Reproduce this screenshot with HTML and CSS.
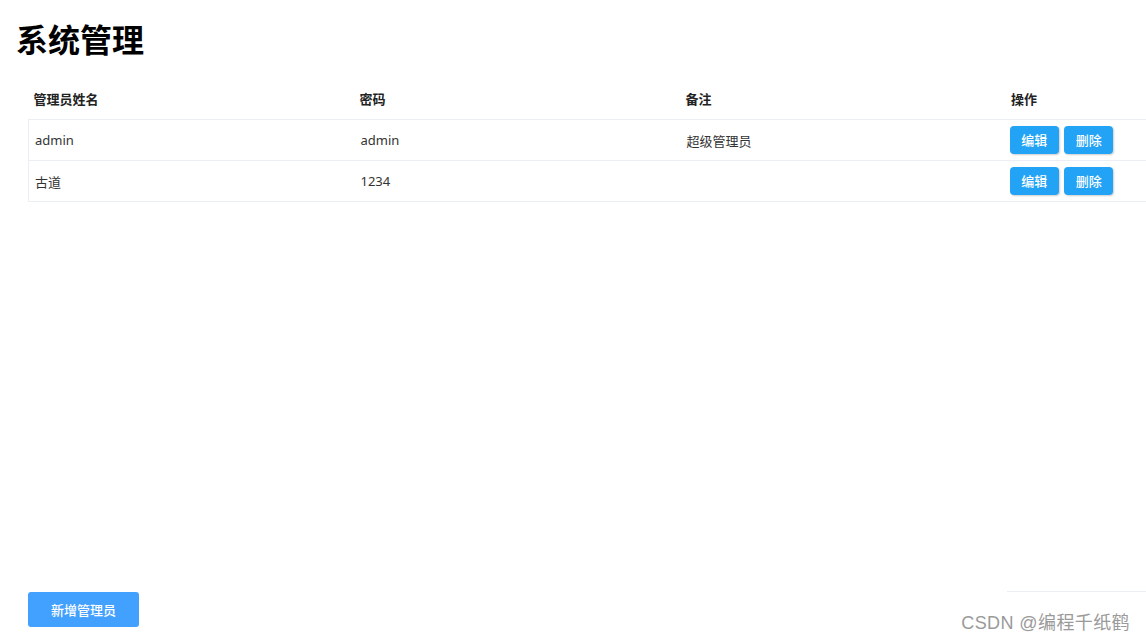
FILE: index.html
```html
<!DOCTYPE html>
<html lang="zh-CN">
<head>
    <meta charset="UTF-8">
    <meta name="viewport" content="width=device-width, initial-scale=1.0">
    <title>系统管理</title>
    <link rel="stylesheet" href="styles.css">
</head>
<body>
    <div class="page">
        <h1 class="title">系统管理</h1>

        <div class="table-wrap">
            <table class="admin-table">
                <thead>
                    <tr>
                        <th>管理员姓名</th>
                        <th>密码</th>
                        <th>备注</th>
                        <th>操作</th>
                    </tr>
                </thead>
                <tbody>
                    <tr>
                        <td>admin</td>
                        <td>admin</td>
                        <td>超级管理员</td>
                        <td class="actions">
                            <a href="#" class="btn-small">编辑</a>
                            <a href="#" class="btn-small">删除</a>
                        </td>
                    </tr>
                    <tr>
                        <td>古道</td>
                        <td>1234</td>
                        <td></td>
                        <td class="actions">
                            <a href="#" class="btn-small">编辑</a>
                            <a href="#" class="btn-small">删除</a>
                        </td>
                    </tr>
                </tbody>
            </table>
        </div>

        <div class="footer">
            <a href="#" class="btn-add">新增管理员</a>
            <div class="footer-line"></div>
        </div>
    </div>

    <div class="watermark">CSDN @编程千纸鹤</div>
</body>
</html>
```

FILE: styles.css
```css
body {
    margin: 0;
    padding: 0;
    background-color: #fff;
    color: #333;
    font-family: "Noto Sans", "Noto Sans CJK SC", sans-serif;
    overflow: hidden;
}

.page {
    height: 640px;
    display: flex;
    flex-direction: column;
    box-sizing: border-box;
}

.title {
    margin: 14px 0 0 16px;
    font-size: 32px;
    line-height: 48px;
    font-weight: bold;
    color: #000;
    font-family: "Noto Sans CJK SC", sans-serif;
}

.table-wrap {
    margin-top: 18px;
    padding-left: 28px;
    overflow: hidden;
    flex: 1;
}

.admin-table {
    width: 1304px;
    border-collapse: collapse;
    font-size: 13px;
}

.admin-table th {
    text-align: left;
    font-weight: bold;
    color: #222;
    height: 36px;
    padding: 0 0 3px 5px;
    width: 326px;
}

.admin-table td {
    height: 40px;
    padding: 0 0 0 6px;
    border-top: 1px solid #ebeef5;
    border-bottom: 1px solid #ebeef5;
    color: #333;
}

.admin-table tbody tr td:first-child {
    border-left: 1px solid #ebeef5;
}

.admin-table td.actions {
    padding-left: 3px;
}

.btn-small {
    display: inline-block;
    width: 49px;
    height: 28px;
    line-height: 28px;
    margin-left: 1px;
    text-align: center;
    background-color: #22a3f5;
    color: #fff;
    text-decoration: none;
    font-weight: 500;
    font-family: "Noto Sans CJK SC", sans-serif;
    border-radius: 4px;
    box-shadow: 1px 1px 2px rgba(0, 0, 0, 0.2);
    margin-right: 1px;
}

.footer {
    display: flex;
    justify-content: space-between;
    align-items: flex-start;
    padding-left: 28px;
    margin-bottom: 13px;
}

.btn-add {
    display: inline-block;
    width: 111px;
    height: 35px;
    line-height: 35px;
    margin-top: 1px;
    text-align: center;
    background-color: #42a0ff;
    color: #fff;
    font-size: 13px;
    font-weight: 500;
    font-family: "Noto Sans CJK SC", sans-serif;
    text-decoration: none;
    border-radius: 3px;
}

.footer-line {
    width: 139px;
    height: 1px;
    background-color: #ebeef5;
}

.watermark {
    position: absolute;
    right: 16px;
    bottom: 6px;
    font-size: 18px;
    letter-spacing: 0.4px;
    color: #9a9a9a;
    text-shadow: 1px 1px 1px #fff;
    font-family: "Liberation Sans", "Noto Sans CJK SC", sans-serif;
}
```
